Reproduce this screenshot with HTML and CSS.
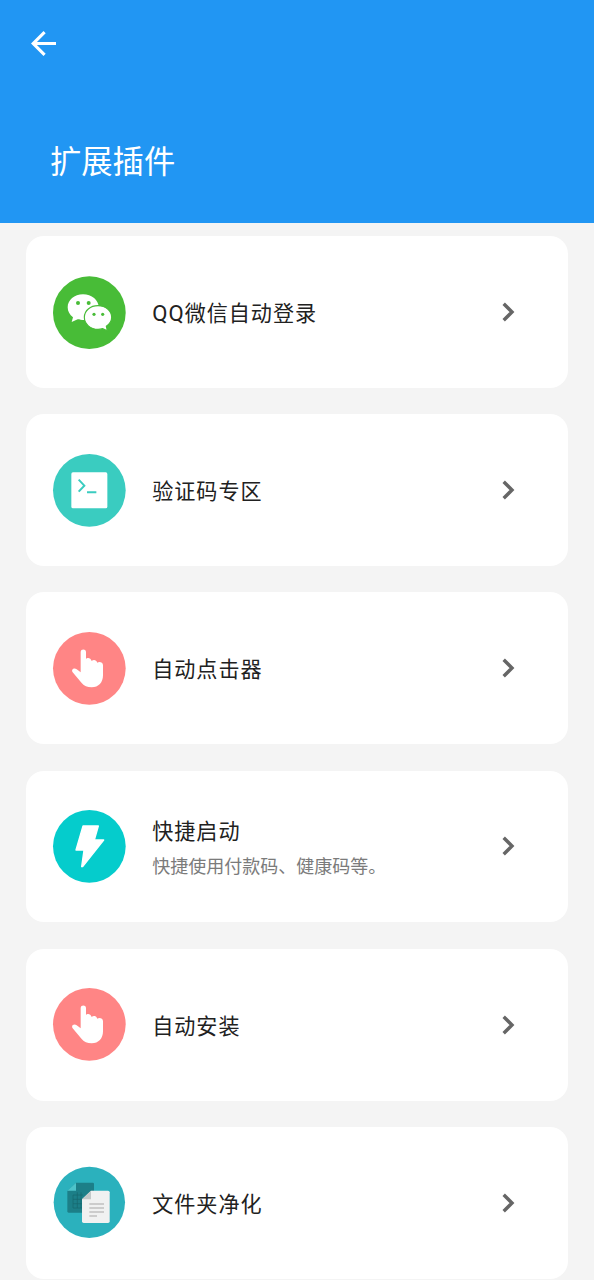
FILE: index.html
```
<!DOCTYPE html>
<html lang="zh-CN">
<head>
<meta charset="utf-8">
<title>扩展插件</title>
<link rel="stylesheet" href="styles.css">
</head>
<body>
<header class="header">
  <svg class="back" viewBox="4 4 16 16"><path fill="#fff" d="M20 11H7.8l5.6-5.6L12 4l-8 8 8 8 1.4-1.4L7.8 13H20z"/></svg>
  <h1 class="heading">扩展插件</h1>
</header>
<main class="list">
  <section class="card">
    <svg class="icon" viewBox="38 31 218 218">
      <circle cx="147" cy="141" r="109" fill="#48bc37"/>
      <path fill="#fff" d="M128 86c-26 0-46 17-46 39 0 12 6 22 16 30l-4 14 18-8c6 2 11 2 20 2 26 0 43-16 43-38S154 86 128 86z"/>
      <path fill="#fff" stroke="#48bc37" stroke-width="3.5" d="M173 120c-23 0-41 15-41 35s18 36 41 36c5 0 10-1 14-2l14 6-3-13c10-7 16-16 16-27 0-20-18-35-41-35z"/>
      <g fill="#48bc37"><circle cx="113" cy="112" r="6"/><circle cx="145" cy="112" r="6"/><circle cx="161" cy="146" r="4.8"/><circle cx="187" cy="146" r="4.8"/></g>
    </svg>
    <div class="text"><div class="title"><span class="latin">QQ</span>微信自动登录</div></div>
    <svg class="chevron" viewBox="0 0 13 20"><path d="M1.7 1.7 10 10l-8.3 8.3"/></svg>
  </section>
  <section class="card">
    <svg class="icon" viewBox="38 32 218 218">
      <circle cx="147" cy="141" r="109" fill="#3accc0"/>
      <rect x="93" y="87" width="108" height="108" rx="5" fill="#fff"/>
      <path d="M115 109l17 18-17 18M140 147h28" fill="none" stroke="#3accc0" stroke-width="6"/>
    </svg>
    <div class="text"><div class="title">验证码专区</div></div>
    <svg class="chevron" viewBox="0 0 13 20"><path d="M1.7 1.7 10 10l-8.3 8.3"/></svg>
  </section>
  <section class="card">
    <svg class="icon" viewBox="38 32 218 218">
      <circle cx="147" cy="141" r="109" fill="#ff8585"/>
      <path fill="#fff" d="M121 92c0-10 16-10 16 0v21c3-5 14-5 17 6 5-5 14-4 17 5 6-4 17-1 17 8v29c0 22-13 37-34 37-14 0-22-4-30-13l-27-32c-6-9 5-15 12-9l12 9z"/>
    </svg>
    <div class="text"><div class="title">自动点击器</div></div>
    <svg class="chevron" viewBox="0 0 13 20"><path d="M1.7 1.7 10 10l-8.3 8.3"/></svg>
  </section>
  <section class="card">
    <svg class="icon" viewBox="38 30 218 218">
      <circle cx="147" cy="139" r="109" fill="#05cccc"/>
      <path fill="#fff" stroke="#fff" stroke-width="4" stroke-linejoin="round" d="M128 78h46l-12 42h28l-63 80h-3l7-50h-24z"/>
    </svg>
    <div class="text"><div class="title">快捷启动</div><div class="subtitle">快捷使用付款码、健康码等。</div></div>
    <svg class="chevron" viewBox="0 0 13 20"><path d="M1.7 1.7 10 10l-8.3 8.3"/></svg>
  </section>
  <section class="card">
    <svg class="icon" viewBox="38 32 218 218">
      <circle cx="147" cy="141" r="109" fill="#ff8585"/>
      <path fill="#fff" d="M121 92c0-10 16-10 16 0v21c3-5 14-5 17 6 5-5 14-4 17 5 6-4 17-1 17 8v29c0 22-13 37-34 37-14 0-22-4-30-13l-27-32c-6-9 5-15 12-9l12 9z"/>
    </svg>
    <div class="text"><div class="title">自动安装</div></div>
    <svg class="chevron" viewBox="0 0 13 20"><path d="M1.7 1.7 10 10l-8.3 8.3"/></svg>
  </section>
  <section class="card">
    <svg class="icon" viewBox="39 34 218 218">
      <circle cx="148" cy="143" r="107" fill="#2bb1bd"/>
      <path fill="#1c7f88" d="M108 84h50q4 0 4 4v86H86q-4 0-4-4v-61z"/>
      <path fill="#4dc3ca" d="M108 84v24H82z"/>
      <path fill="none" stroke="#16666e" stroke-width="2" d="M99 121h30M99 134h30M99 147h30M99 160h30M99 121v39M112 113v47M123 113v47"/>
      <path fill="#f0f1f1" d="M153 108h51q5 0 5 5v87q0 5-5 5h-73q-5 0-5-5v-66z"/>
      <path fill="#c3c8c8" d="M153 108v26h-27z"/>
      <path fill="none" stroke="#a8a8a8" stroke-width="3" d="M148 148h44M148 160h44M148 172h44M148 184h23"/>
    </svg>
    <div class="text"><div class="title">文件夹净化</div></div>
    <svg class="chevron" viewBox="0 0 13 20"><path d="M1.7 1.7 10 10l-8.3 8.3"/></svg>
  </section>
</main>
</body>
</html>
```
FILE: styles.css
```
* { box-sizing: border-box; }
html { height: 1280px; overflow: hidden; }
body {
  margin: 0;
  height: 1280px;
  overflow: hidden;
  background: #f4f4f4;
  font-family: Roboto, "Noto Sans CJK SC", sans-serif;
}
.header {
  height: 223px;
  padding: 31px 0 0 31px;
  background: #2196f3;
  color: #fff;
}
.back { display: block; width: 25px; height: 25px; }
.heading {
  margin: 84px 0 0 19px;
  font-size: 31.3px;
  line-height: 46px;
  font-weight: 400;
}
.list {
  display: flex;
  flex-direction: column;
  gap: 26.4px;
  padding: 13px 26px 0;
}
.card {
  display: flex;
  flex: none;
  align-items: center;
  height: 151.8px;
  padding: 0 53px 0 26.6px;
  border-radius: 18px;
  background: #fff;
}
.icon { flex: none; width: 72.7px; height: 72.7px; overflow: visible; }
.text { flex: 1; padding: 4px 0 0 27px; }
.title {
  color: #212121;
  font-size: 21.1px;
  line-height: 30px;
  letter-spacing: .95px;
}
.latin { font-size: 22.2px; line-height: 1; }
.subtitle {
  margin-top: 7px;
  color: #7b7b7b;
  font-size: 18px;
  line-height: 26px;
}
.chevron {
  flex: none;
  width: 13px;
  height: 20px;
  fill: none;
  stroke: #666;
  stroke-width: 3.4;
}
```
